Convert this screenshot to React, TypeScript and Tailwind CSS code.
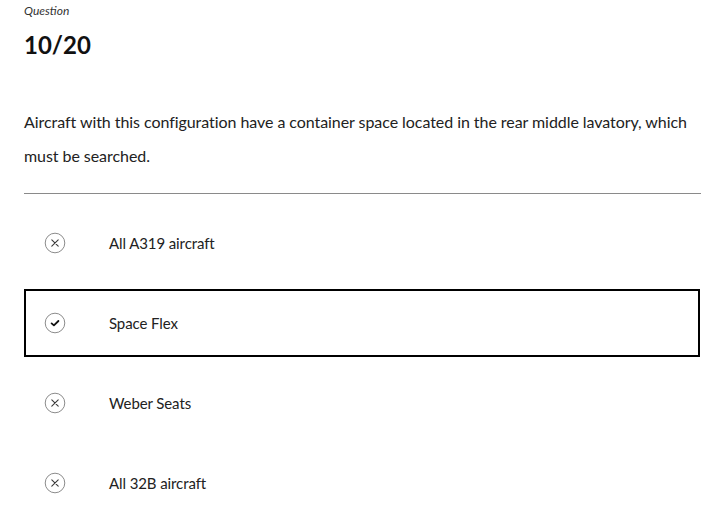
import React from "react";

const font = { fontFamily: "Lato, 'Liberation Sans', sans-serif" };

function XIcon() {
  return (
    <svg width="22" height="22" viewBox="0 0 22 22" className="shrink-0">
      <circle cx="11" cy="11" r="9.8" fill="none" stroke="#8c8c8c" strokeWidth="1" />
      <path d="M7.8 7.8 L14.2 14.2 M14.2 7.8 L7.8 14.2" stroke="#3a3a3a" strokeWidth="1.1" strokeLinecap="round" />
    </svg>
  );
}

function CheckIcon() {
  return (
    <svg width="22" height="22" viewBox="0 0 22 22" className="shrink-0">
      <circle cx="11" cy="11" r="9.8" fill="none" stroke="#8c8c8c" strokeWidth="1" />
      <path d="M7.6 11.4 L9.9 13.4 L14.4 9" fill="none" stroke="#111" strokeWidth="1.8" strokeLinecap="round" strokeLinejoin="round" />
    </svg>
  );
}

const options = [
  { label: "All A319 aircraft", selected: false },
  { label: "Space Flex", selected: true },
  { label: "Weber Seats", selected: false },
  { label: "All 32B aircraft", selected: false },
];

export default function App() {
  return (
    <div className="w-[712px] h-[508px] overflow-hidden bg-white text-[#222]" style={font}>
      <div className="px-6">
        <div className="pt-[3px] text-[12px] italic leading-[16px] text-[#333]">Question</div>
        <div className="mt-[12px] text-[24px] font-bold leading-[28px] text-[#111]">10/20</div>
        <p className="mt-[46px] w-[670px] text-[16px] leading-[34px] text-[#222] tracking-[-0.06px]">
          Aircraft with this configuration have a container space located in the rear middle lavatory, which must be searched.
        </p>
        <div className="mt-[20px] h-px bg-[#8a8a8a] w-[677px]" />
        <div className="mt-[15px] flex flex-col gap-3 w-[676px]">
          {options.map((o) => (
            <div
              key={o.label}
              className={
                "flex items-center h-[68px] pl-[18px] border-2 " +
                (o.selected ? "border-black" : "border-transparent")
              }
            >
              <div className="w-[22px] flex items-center justify-center">
                {o.selected ? <CheckIcon /> : <XIcon />}
              </div>
              <span className="ml-[43px] text-[15px] text-[#222] tracking-[-0.1px]">{o.label}</span>
            </div>
          ))}
        </div>
      </div>
    </div>
  );
}
